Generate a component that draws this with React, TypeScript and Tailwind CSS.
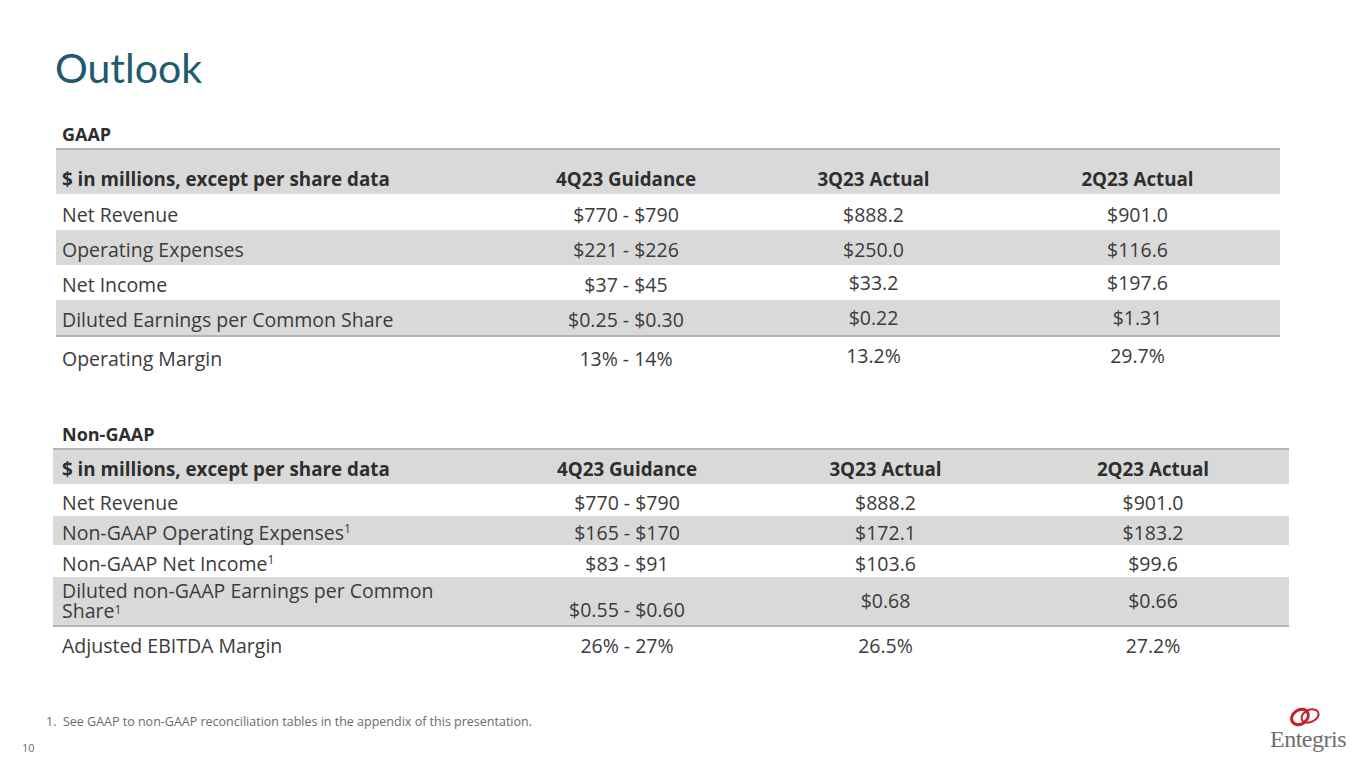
import React from "react";

type Row = {
  label: React.ReactNode;
  g: string;
  a: string;
  b: string;
  h: string;
  gray?: boolean;
  borderBottom?: boolean;
  twoLine?: boolean;
  up?: boolean;
};

const Sup = () => <sup className="text-[12px] relative top-[-4px] leading-none">1</sup>;

const gaapRows: Row[] = [
  { label: "Net Revenue", g: "$770 - $790", a: "$888.2", b: "$901.0", h: "h-[36px]" },
  { label: "Operating Expenses", g: "$221 - $226", a: "$250.0", b: "$116.6", h: "h-[35px]", gray: true },
  { label: "Net Income", g: "$37 - $45", a: "$33.2", b: "$197.6", h: "h-[35px]", up: true },
  { label: "Diluted Earnings per Common Share", g: "$0.25 - $0.30", a: "$0.22", b: "$1.31", h: "h-[37px]", gray: true, borderBottom: true, up: true },
  { label: "Operating Margin", g: "13% - 14%", a: "13.2%", b: "29.7%", h: "h-[38px]", up: true },
];

const nonGaapRows: Row[] = [
  { label: "Net Revenue", g: "$770 - $790", a: "$888.2", b: "$901.0", h: "h-[32px]" },
  { label: <>Non-GAAP Operating Expenses<Sup /></>, g: "$165 - $170", a: "$172.1", b: "$183.2", h: "h-[29px]", gray: true },
  { label: <>Non-GAAP Net Income<Sup /></>, g: "$83 - $91", a: "$103.6", b: "$99.6", h: "h-[32px]" },
  {
    label: (
      <span className="block leading-[20.5px]">
        Diluted non-GAAP Earnings per Common
        <br />
        Share<Sup />
      </span>
    ),
    g: "$0.55 - $0.60",
    a: "$0.68",
    b: "$0.66",
    h: "h-[50px]",
    gray: true,
    borderBottom: true,
    twoLine: true,
  },
  { label: "Adjusted EBITDA Margin", g: "26% - 27%", a: "26.5%", b: "27.2%", h: "h-[33px]" },
];

function Table({
  cols,
  headerH,
  rows,
  padL,
}: {
  cols: string;
  headerH: string;
  rows: Row[];
  padL: string;
}) {
  return (
    <div className="border-t-2 border-[#b3b3b3]">
      <div className={`grid ${cols} ${headerH} bg-[#d9d9d9] font-bold text-[#2e2e2e] text-[18.8px] items-end pb-[3px]`}>
        <div className={padL}>$ in millions, except per share data</div>
        <div className="text-center">4Q23 Guidance</div>
        <div className="text-center">3Q23 Actual</div>
        <div className="text-center">2Q23 Actual</div>
      </div>
      {rows.map((r, i) => (
        <div
          key={i}
          className={`grid ${cols} ${r.h} ${r.gray ? "bg-[#d9d9d9]" : "bg-white"} ${
            r.borderBottom ? "border-b-2 border-[#b3b3b3]" : ""
          }`}
        >
          {r.twoLine ? (
            <>
              <div className={`${padL} flex items-center`}>{r.label}</div>
              <div className="text-center flex items-end justify-center pb-[3px]">{r.g}</div>
              <div className="text-center flex items-center justify-center">{r.a}</div>
              <div className="text-center flex items-center justify-center">{r.b}</div>
            </>
          ) : (
            <>
              <div className={`${padL} flex items-center pt-[5px]`}>{r.label}</div>
              <div className="flex items-center justify-center pt-[5px]">{r.g}</div>
              <div className={`flex items-center justify-center ${r.up ? "pt-0" : "pt-[5px]"}`}>{r.a}</div>
              <div className={`flex items-center justify-center ${r.up ? "pt-0" : "pt-[5px]"}`}>{r.b}</div>
            </>
          )}
        </div>
      ))}
    </div>
  );
}

export default function App() {
  return (
    <div
      className="relative w-[1365px] h-[768px] bg-white overflow-hidden text-[#3b3b3b] [font-variant-ligatures:none]"
      style={{ fontFamily: "'Open Sans', Lato, sans-serif" }}
    >
      <div className="pt-[46px] pl-[55px]">
        <h1
          className="text-[41px] leading-[44px] text-[#215a6b] font-normal"
          style={{ fontFamily: "Lato, sans-serif" }}
        >
          Outlook
        </h1>
      </div>

      <div className="text-[19.5px] leading-[24px]">
        <div className="mt-[30px] ml-[56px] w-[1224px]">
          <div className="h-[28px] flex items-center pl-[6px] font-bold text-[18px] text-[#2e2e2e]">GAAP</div>
          <Table cols="grid-cols-[444px_252px_243px_285px]" headerH="h-[44px]" rows={gaapRows} padL="pl-[6px]" />
        </div>

        <div className="mt-[45px] ml-[53px] w-[1236px]">
          <div className="h-[28px] flex items-center pl-[9px] font-bold text-[18px] text-[#2e2e2e]">Non-GAAP</div>
          <Table cols="grid-cols-[447px_254px_263px_272px]" headerH="h-[34px]" rows={nonGaapRows} padL="pl-[9px]" />
        </div>
      </div>

      <div className="absolute left-[46px] top-[714px] text-[12.5px] leading-[16px] text-[#6b6b6b]">
        1.&nbsp;&nbsp;See GAAP to non-GAAP reconciliation tables in the appendix of this presentation.
      </div>
      <div className="absolute left-[22px] top-[741px] text-[11px] leading-[14px] text-[#6b6b6b]">10</div>

      <div className="absolute left-[1266px] top-[704px] w-[84px] flex flex-col items-center">
        <svg width="36" height="24" viewBox="0 0 36 24" className="-ml-[4px]">
          <ellipse cx="12" cy="13" rx="9" ry="7" transform="rotate(-35 12 13)" fill="none" stroke="#c4202f" strokeWidth="3" />
          <ellipse cx="22" cy="12" rx="9" ry="6" transform="rotate(-25 22 12)" fill="none" stroke="#c4202f" strokeWidth="2" />
        </svg>
        <div
          className="text-[24px] leading-[22px] text-[#6e6e6e] tracking-[-0.5px]"
          style={{ fontFamily: "'Liberation Serif', serif" }}
        >
          Entegris
        </div>
      </div>
    </div>
  );
}
